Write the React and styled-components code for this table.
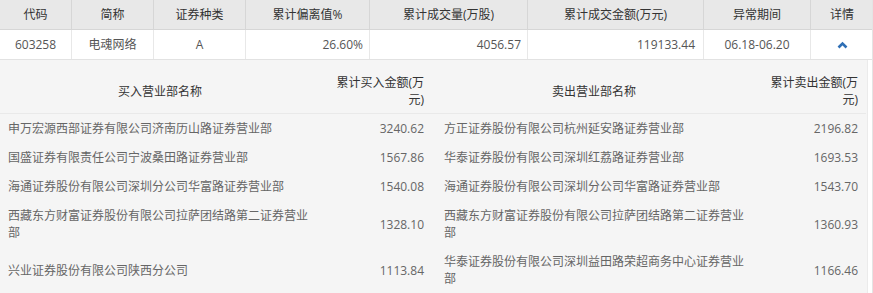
import React from "react";
import styled, { createGlobalStyle } from "styled-components";

const GlobalStyle = createGlobalStyle`
  body {
    margin: 0;
    background: #fff;
    font-family: "Open Sans", "Noto Sans CJK SC", sans-serif;
    font-size: 12px;
  }
`;

const COLUMNS = "71px 82px 92px 124px 158px 176px 107px 63px";

const StyledTable = styled.div`
  width: 873px;
  border-right: 1px solid #e4e4e4;
  box-sizing: border-box;
`;
const StyledHeadRow = styled.div`
  display: grid;
  grid-template-columns: ${COLUMNS};
  background: #e8e8e8;
  border-bottom: 1px solid #d6d6d6;
  color: #333;
`;
const StyledHeadCell = styled.div`
  height: 29px;
  line-height: 29px;
  text-align: center;
  white-space: nowrap;
  border-left: ${({ $first }) => ($first ? "none" : "1px solid #d6d6d6")};
`;
const StyledDataRow = styled.div`
  display: grid;
  grid-template-columns: ${COLUMNS};
  background: #fff;
  border-bottom: 1px solid #e2e2e2;
  color: #555;
`;
const StyledDataCell = styled.div`
  height: 29px;
  line-height: 29px;
  padding: 0 ${({ $pad }) => $pad || 6}px;
  text-align: ${({ $align }) => $align || "center"};
  white-space: nowrap;
  border-left: ${({ $first }) => ($first ? "none" : "1px solid #e8e8e8")};
  display: flex;
  align-items: center;
  justify-content: ${({ $align }) =>
    $align === "right" ? "flex-end" : "center"};
`;
const StyledPanel = styled.div`
  background: #f5f5f5;
  padding-top: 4px;
  border-bottom: 1px solid #e6e6e6;
  margin-right: 4px;
  border-right: 1px solid #ebebeb;
`;
const StyledDetailGrid = styled.div`
  display: grid;
  grid-template-columns: 320px 112px 320px 114px;
  color: #666;
`;
const StyledSubHead = styled.div`
  padding: 10px 8px 5px ${({ $left }) => $left || 8}px;
  line-height: 17px;
  color: #333;
  text-align: ${({ $align }) => $align};
  border-bottom: 1px solid #e9e9e9;
  display: flex;
  align-items: center;
  justify-content: ${({ $align }) =>
    $align === "right" ? "flex-end" : "center"};
`;
const StyledCell = styled.div`
  padding: 6px 8px 6px ${({ $left }) => $left || 8}px;
  line-height: 17px;
  display: flex;
  align-items: center;
  justify-content: ${({ $align }) =>
    $align === "right" ? "flex-end" : "flex-start"};
  text-align: ${({ $align }) => $align || "left"};
`;
const StyledChevron = styled.svg`
  width: 11px;
  height: 8px;
  display: block;
`;

const HEADERS = [
  "代码",
  "简称",
  "证券种类",
  "累计偏离值%",
  "累计成交量(万股)",
  "累计成交金额(万元)",
  "异常期间",
  "详情",
];

const ROWS = [
  ["申万宏源西部证券有限公司济南历山路证券营业部", "3240.62", "方正证券股份有限公司杭州延安路证券营业部", "2196.82"],
  ["国盛证券有限责任公司宁波桑田路证券营业部", "1567.86", "华泰证券股份有限公司深圳红荔路证券营业部", "1693.53"],
  ["海通证券股份有限公司深圳分公司华富路证券营业部", "1540.08", "海通证券股份有限公司深圳分公司华富路证券营业部", "1543.70"],
  ["西藏东方财富证券股份有限公司拉萨团结路第二证券营业部", "1328.10", "西藏东方财富证券股份有限公司拉萨团结路第二证券营业部", "1360.93"],
  ["兴业证券股份有限公司陕西分公司", "1113.84", "华泰证券股份有限公司深圳益田路荣超商务中心证券营业部", "1166.46"],
];

const App = () => {
  return (
    <StyledTable>
      <GlobalStyle />
      <StyledHeadRow>
        {HEADERS.map((h, i) => (
          <StyledHeadCell key={h} $first={i === 0}>
            {h}
          </StyledHeadCell>
        ))}
      </StyledHeadRow>
      <StyledDataRow>
        <StyledDataCell $first>603258</StyledDataCell>
        <StyledDataCell>电魂网络</StyledDataCell>
        <StyledDataCell>A</StyledDataCell>
        <StyledDataCell $align="right">26.60%</StyledDataCell>
        <StyledDataCell $align="right">4056.57</StyledDataCell>
        <StyledDataCell $align="right" $pad={8}>
          119133.44
        </StyledDataCell>
        <StyledDataCell>06.18-06.20</StyledDataCell>
        <StyledDataCell>
          <StyledChevron viewBox="0 0 11 8">
            <polyline
              points="1.5,6.5 5.5,2.5 9.5,6.5"
              fill="none"
              stroke="#2f6fb5"
              strokeWidth="2.6"
            />
          </StyledChevron>
        </StyledDataCell>
      </StyledDataRow>
      <StyledPanel>
        <StyledDetailGrid>
          <StyledSubHead $align="center">买入营业部名称</StyledSubHead>
          <StyledSubHead $align="right">累计买入金额(万元)</StyledSubHead>
          <StyledSubHead $align="center" $left={12}>
            卖出营业部名称
          </StyledSubHead>
          <StyledSubHead $align="right">累计卖出金额(万元)</StyledSubHead>
          {ROWS.map((r, i) => (
            <React.Fragment key={i}>
              <StyledCell>{r[0]}</StyledCell>
              <StyledCell $align="right">{r[1]}</StyledCell>
              <StyledCell $left={12}>{r[2]}</StyledCell>
              <StyledCell $align="right">{r[3]}</StyledCell>
            </React.Fragment>
          ))}
        </StyledDetailGrid>
      </StyledPanel>
    </StyledTable>
  );
};

export default App;
